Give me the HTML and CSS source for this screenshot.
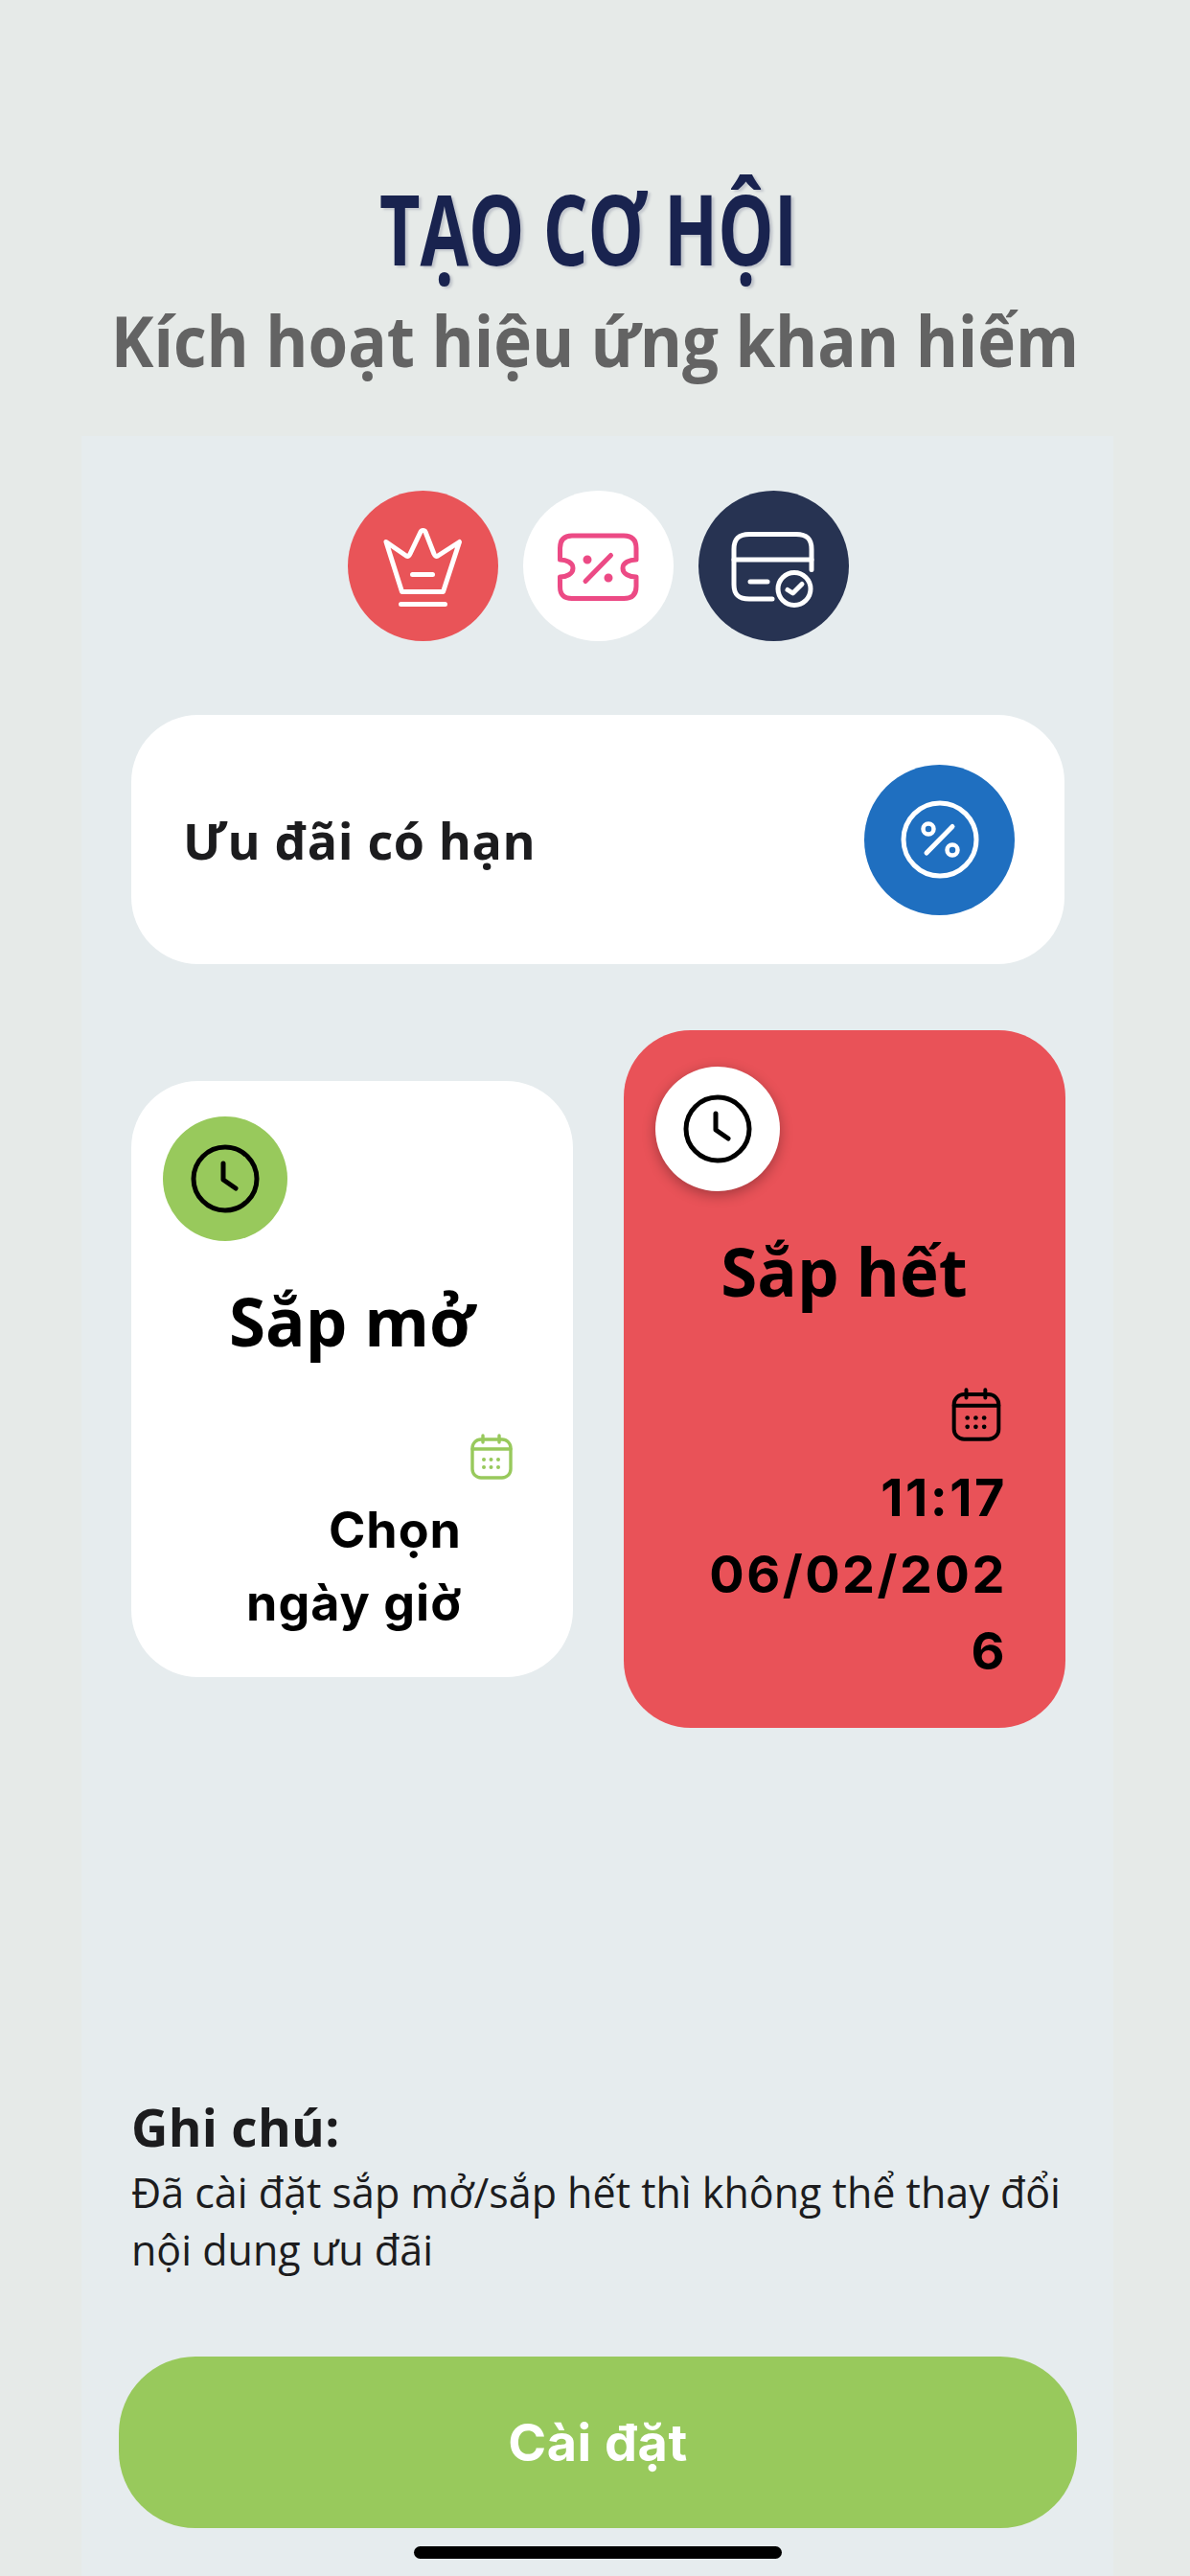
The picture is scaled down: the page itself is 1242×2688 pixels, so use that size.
FILE: index.html

```html
<!DOCTYPE html>
<html lang="vi">
<head>
  <meta charset="UTF-8">
  <title>Tạo cơ hội</title>
  <link rel="stylesheet" href="styles.css">
</head>
<body>
  <svg class="defs" width="0" height="0">
    <symbol id="clock" viewBox="0 0 80 80">
      <circle cx="40" cy="40" r="33" fill="none" stroke="currentColor" stroke-width="5"/>
      <path d="M38 24 V41 L51 50" fill="none" stroke="currentColor" stroke-width="5" stroke-linecap="round" stroke-linejoin="round"/>
    </symbol>
    <symbol id="calendar" viewBox="0 0 44 48">
      <g fill="none" stroke="currentColor" stroke-width="3.4" stroke-linecap="round">
        <rect x="2" y="6" width="40" height="40" rx="9"/>
        <path d="M13 2 V9 M30 2 V9 M2 16 H42"/>
      </g>
      <g fill="currentColor">
        <circle cx="14" cy="27" r="2"/><circle cx="21.5" cy="27" r="2"/><circle cx="29" cy="27" r="2"/>
        <circle cx="14" cy="35" r="2"/><circle cx="21.5" cy="35" r="2"/><circle cx="29" cy="35" r="2"/>
      </g>
    </symbol>
  </svg>

  <div class="page">
    <header class="head">
      <h1 class="head-title">TẠO CƠ HỘI</h1>
      <p class="head-sub">Kích hoạt hiệu ứng khan hiếm</p>
    </header>

    <main class="panel">
      <div class="step-icons">
        <div class="round round-red">
          <svg class="icon-90" viewBox="0 0 90 90" fill="none" stroke="#fff" stroke-width="5" stroke-linecap="round" stroke-linejoin="round">
            <path d="M7 19.5 L28 34 C30 35 31 34 32 32 L43 9 C44 7 47 7 48 9 L57 32 C58 34 59 35 61 34 L83.5 19.5 L66.5 71.5 H23.5 Z"/>
            <path d="M34.5 53.5 H55.5 M22.5 84.5 H68.5"/>
          </svg>
        </div>
        <div class="round round-white">
          <svg class="icon-90" viewBox="0 0 90 90" fill="none" stroke="#ec4a85" stroke-width="5" stroke-linecap="round" stroke-linejoin="round">
            <path d="M18 13 H72 C80 13 85 17 85 26 V38 C78 38 71 41 71 47 C71 53 78 56 85 56 V66 C85 75 80 78.5 72 78.5 H18 C10 78.5 5.5 75 5.5 66 V56 C12 56 19 53 19 47 C19 41 12 38 5.5 38 V26 C5.5 17 10 13 18 13 Z"/>
            <path d="M58.5 33.5 L32 60.5"/>
            <circle cx="34" cy="38" r="2" fill="#ec4a85"/>
            <circle cx="56" cy="57" r="2" fill="#ec4a85"/>
          </svg>
        </div>
        <div class="round round-navy">
          <svg class="icon-90" viewBox="0 0 90 90" fill="none" stroke="#fff" stroke-width="5" stroke-linecap="round" stroke-linejoin="round">
            <path d="M85 48.5 V27 C85 16 80 11.5 69 11.5 H20 C9 11.5 4 16 4 27 V64 C4 75 9 79 20 79 H44"/>
            <path d="M4 38 H85 M21 61 H39"/>
            <circle cx="67" cy="68.5" r="17"/>
            <path d="M60 69.5 L65.5 73 L75 63.5"/>
          </svg>
        </div>
      </div>

      <section class="promo">
        <span class="promo-label">Ưu đãi có hạn</span>
        <div class="round round-blue">
          <svg class="icon-90" viewBox="0 0 90 90" fill="none" stroke="#fff" stroke-width="5" stroke-linecap="round">
            <circle cx="45" cy="45" r="38"/>
            <path d="M58 31.5 L31 59"/>
            <circle cx="33" cy="34" r="5.5" stroke-width="4.5"/>
            <circle cx="58" cy="56" r="5.5" stroke-width="4.5"/>
          </svg>
        </div>
      </section>

      <section class="cards">
        <article class="card card-open">
          <div class="badge badge-green"><svg class="icon-clock"><use href="#clock"/></svg></div>
          <h2 class="card-title">Sắp mở</h2>
          <svg class="icon-cal"><use href="#calendar"/></svg>
          <p class="card-date">Chọn ngày giờ</p>
        </article>
        <article class="card card-end">
          <div class="badge badge-white"><svg class="icon-clock"><use href="#clock"/></svg></div>
          <h2 class="card-title">Sắp hết</h2>
          <svg class="icon-cal"><use href="#calendar"/></svg>
          <p class="card-date">11:17 06/02/2026</p>
        </article>
      </section>

      <section class="note">
        <h3 class="note-title">Ghi chú:</h3>
        <p class="note-text">Đã cài đặt sắp mở/sắp hết thì không thể thay đổi nội dung ưu đãi</p>
      </section>

      <button class="submit">Cài đặt</button>
    </main>

    <div class="home-bar"></div>
  </div>
</body>
</html>
```

FILE: styles.css

```css
* { box-sizing: border-box; }
html, body { margin: 0; padding: 0; }
body { font-family: "Open Sans", "Noto Sans", sans-serif; background: #e6eae8; }
.defs { position: absolute; }

.page { position: relative; width: 1242px; height: 2688px; overflow: hidden; display: flex; flex-direction: column; }

.head { padding-top: 183px; text-align: center; }
.head-title {
  margin: 0 14px 0 0; font-size: 102px; line-height: 110px; font-weight: 700; color: #19234f;
  transform: scaleX(0.72); text-shadow: 4px 2px 3px #c2c6cc;
}
.head-sub { margin: 17px 0 55px; font-size: 74px; line-height: 90px; font-weight: 700; color: #636363; transform: scaleX(0.909); }

.panel { flex: 1; margin: 0 80px 0 85px; padding: 57px 38px 0 39px; background: #e6ecee; }

.round { width: 157px; height: 157px; border-radius: 50%; display: flex; align-items: center; justify-content: center; flex: none; }
.round-red { background: #e95458; }
.round-white { background: #fff; }
.round-navy { background: #273352; }
.round-blue { background: #1f6fc0; }
.icon-90 { width: 90px; height: 90px; }

.step-icons { display: flex; justify-content: center; gap: 26px; }

.promo {
  margin: 77px 13px 0; height: 260px; padding: 0 52px 0 54px; background: #fff; border-radius: 70px;
  display: flex; align-items: center; justify-content: space-between;
}
.promo-label { font-size: 52px; font-weight: 700; letter-spacing: 0.6px; color: #1c1c1e; }

.cards { margin: 69px 13px 0; height: 728px; display: grid; grid-template-columns: 461px 461px; gap: 53px; align-items: center; }
.card { padding: 37px 34px 0 33px; border-radius: 70px; display: flex; flex-direction: column; color: #000; }
.card-open { height: 622px; background: #fff; }
.card-end { height: 728px; padding-top: 38px; background: #e95258; }

.badge { width: 130px; height: 130px; border-radius: 50%; display: flex; align-items: center; justify-content: center; }
.badge-green { background: #98c95c; }
.badge-white { background: #fff; box-shadow: 0 4px 14px rgba(0, 0, 0, 0.3); }
.icon-clock { width: 80px; height: 80px; color: #000; }

.card-title { margin: 38px 0 0; font-size: 69px; line-height: 90px; font-weight: 700; text-align: center; }

.icon-cal { align-self: flex-end; flex: none; }
.card-open .icon-cal { width: 44px; height: 48px; color: #98c95c; margin: 73px 29px 0 0; }
.card-end .icon-cal { width: 52px; height: 56px; color: #000; margin: 77px 33px 0 0; }

.card-date { margin: 0; align-self: flex-end; font-family: Inter, "Open Sans", sans-serif; font-size: 54px; line-height: 80px; font-weight: 700; text-align: right; letter-spacing: 2.5px; overflow-wrap: anywhere; }
.card-open .card-date { width: 270px; margin: 15px 82px 0 0; font-size: 52px; line-height: 76px; letter-spacing: 1px; }
.card-end .card-date { width: 315px; margin: 19px 27px 0 0; }

.note { margin: 387px 0 0 13px; color: #1c1c1e; }
.note-title { margin: 0; font-size: 53px; line-height: 60px; font-weight: 700; letter-spacing: 0.3px; }
.note-text { margin: 8px 0 0; font-size: 43px; line-height: 60px; }

.submit {
  display: block; width: 1000px; height: 179px; margin-top: 81px; border: 0; border-radius: 80px;
  background: #98c95c; color: #fff; font-family: Inter, "Open Sans", sans-serif; font-size: 54px; font-weight: 700; letter-spacing: 0.5px;
}

.home-bar { position: absolute; left: 432px; top: 2657px; width: 384px; height: 13px; border-radius: 7px; background: #000; }
```
